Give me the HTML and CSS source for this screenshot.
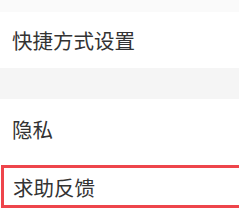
FILE: index.html
```html
<!DOCTYPE html>
<html lang="zh-CN">
<head>
  <meta charset="UTF-8">
  <meta name="viewport" content="width=device-width, initial-scale=1.0">
  <title>设置</title>
  <link rel="stylesheet" href="styles.css">
</head>
<body>
  <div class="top-strip"></div>
  <div class="item item-first">快捷方式设置</div>
  <div class="section-gap"></div>
  <div class="item item-privacy">隐私</div>
  <div class="item item-help">求助反馈</div>
</body>
</html>
```

FILE: styles.css
```css
body {
  margin: 0;
  background-color: #fff;
  font-family: "Noto Sans CJK SC", "Noto Sans", sans-serif;
  overflow: hidden;
}

.top-strip {
  height: 12px;
  background-color: #fafafa;
}

.item {
  display: flex;
  align-items: center;
  padding-left: 12px;
  font-size: 20.5px;
  color: #333;
  background-color: #fff;
}

.item-first {
  height: 56px;
}

.section-gap {
  height: 31px;
  background-color: #f5f5f5;
}

.item-privacy {
  height: 60px;
}

.item-help {
  height: 43px;
  box-sizing: border-box;
  margin: 6px -6px 0 1px;
  padding-left: 9px;
  border: 3px solid #ee454b;
}
```
